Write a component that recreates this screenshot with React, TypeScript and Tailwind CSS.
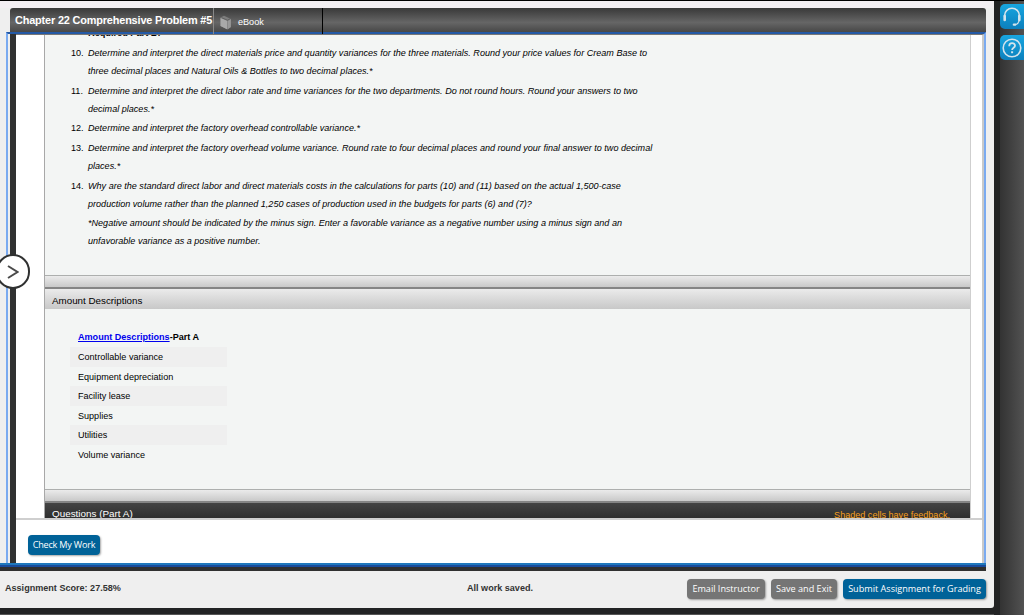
import clsx from "clsx";

type Requirement = {
  num?: string;
  lines: string[];
  height: string;
};

const requirements: Requirement[] = [
  {
    num: "10.",
    height: "h-[38px]",
    lines: [
      "Determine and interpret the direct materials price and quantity variances for the three materials. Round your price values for Cream Base to",
      "three decimal places and Natural Oils & Bottles to two decimal places.*",
    ],
  },
  {
    num: "11.",
    height: "h-[37.5px]",
    lines: [
      "Determine and interpret the direct labor rate and time variances for the two departments. Do not round hours. Round your answers to two",
      "decimal places.*",
    ],
  },
  {
    num: "12.",
    height: "h-[19.5px]",
    lines: ["Determine and interpret the factory overhead controllable variance.*"],
  },
  {
    num: "13.",
    height: "h-[38px]",
    lines: [
      "Determine and interpret the factory overhead volume variance. Round rate to four decimal places and round your final answer to two decimal",
      "places.*",
    ],
  },
  {
    num: "14.",
    height: "h-[37.5px]",
    lines: [
      "Why are the standard direct labor and direct materials costs in the calculations for parts (10) and (11) based on the actual 1,500-case",
      "production volume rather than the planned 1,250 cases of production used in the budgets for parts (6) and (7)?",
    ],
  },
  {
    height: "h-[38px]",
    lines: [
      "*Negative amount should be indicated by the minus sign. Enter a favorable variance as a negative number using a minus sign and an",
      "unfavorable variance as a positive number.",
    ],
  },
];

const amounts = [
  "Controllable variance",
  "Equipment depreciation",
  "Facility lease",
  "Supplies",
  "Utilities",
  "Volume variance",
];

function BookIcon() {
  return (
    <svg width="12" height="15" viewBox="0 0 12 15">
      <path d="M0.5 2.6 L4 0.8 L11 4 V12 L7.5 14.5 L0.5 11 Z" fill="#7d7d7d" />
      <path d="M0.5 3 L7 5.8 V14.2 L0.5 11 Z" fill="#a9a9a9" />
      <path d="M7.6 6 L10.8 4.2 V12 L7.6 14.2 Z" fill="#999" />
      <path d="M1.5 2.6 L7.4 5.2 L10.2 3.8" stroke="#555" strokeWidth="0.7" fill="none" />
    </svg>
  );
}

function HeadsetIcon() {
  return (
    <svg width="20" height="20" viewBox="0 0 20 20" fill="none" stroke="#d4e4ec" strokeLinecap="round">
      <path d="M2.6 9.5 V8.6 a7.4 7.4 0 0 1 14.8 0 V9.5" strokeWidth="1.5" />
      <path d="M2.7 9 V13 M17.3 9 V13" strokeWidth="2.6" />
      <path d="M17 14 C16.4 16.2 15 17.4 13 17.6" strokeWidth="1.1" />
      <path d="M11.8 17.7 h1.4" strokeWidth="2.2" />
    </svg>
  );
}

function HelpIcon() {
  return (
    <svg width="20" height="20" viewBox="0 0 20 20" fill="none" stroke="#d4e4ec">
      <circle cx="10" cy="10" r="8.8" strokeWidth="1.6" />
      <path d="M7.2 8.2 C7.2 4.2 13 4.3 13 7.8 C13 9.9 10.1 9.8 10.1 12" strokeWidth="1.8" />
      <path d="M10.1 13.3 v1.9" strokeWidth="2" />
    </svg>
  );
}

function SectionFooter() {
  return (
    <div className="h-[14px] border-t border-[#adafae] border-b-2 border-b-[#858585] bg-gradient-to-b from-[#ebebeb] to-[#c9c9c9]" />
  );
}

function ActionButton({ label, className }: { label: string; className: string }) {
  return (
    <button
      type="button"
      className={clsx(
        "h-[20px] shrink-0 whitespace-nowrap rounded-[4px] text-center font-['Open_Sans',sans-serif] leading-[20px] text-white shadow-[1px_1px_2px_rgba(0,0,0,0.35)]",
        className
      )}
    >
      {label}
    </button>
  );
}

export default function App() {
  return (
    <div className="flex h-[615px] w-[1024px] overflow-hidden bg-[#222324] font-['Liberation_Sans',Arial,sans-serif] text-black">
      <div className="flex w-[994px] shrink-0 flex-col">
        <main className="relative flex h-[607.5px] flex-col rounded-br-[3px] border-t border-black bg-[#efefef]">
          <div className="h-[7px] shrink-0 bg-[#f3eff3]" />

          <header className="relative z-10 ml-[10px] flex h-[24px] w-[976px] shrink-0 rounded-t-[3px] bg-gradient-to-b from-[#393939] via-[#666] via-60% to-[#484848] text-white">
            <h1 className="w-[203px] whitespace-nowrap pl-[5px] text-[10.9px] font-bold leading-[24px] tracking-[-0.16px]">
              Chapter 22 Comprehensive Problem #5
            </h1>
            <div className="flex h-[26px] w-[110px] border-l border-[#888] border-r border-r-black pl-[6px] pt-[7px]">
              <BookIcon />
              <span className="pl-[6px] text-[9.1px] leading-[15px]">eBook</span>
            </div>
          </header>

          <div className="ml-[6px] flex h-[531px] w-[980px] shrink-0 border-x-2 border-t-2 border-x-[#7aaaf0] border-t-[#2459a5]">
            <div className="w-[2px] shrink-0 bg-[#efefef]" />
            <div className="w-[6px] shrink-0 bg-[#303131]" />
            <div className="flex grow flex-col border-r-2 border-t border-[#c9c9c9] border-t-[#777] bg-white">
              <div className="ml-[28px] h-[483px] w-[927px] shrink-0 overflow-hidden border-x border-l-[#a8a8a8] border-r-[#cfcfcf] bg-[#f3f5f4]">
                <section className="h-[240px] overflow-hidden">
                  <div className="h-[8.5px] pl-[43px] text-[9.2px] font-bold">
                    <p className="-mt-[7px] leading-[11px]">Required Part B:</p>
                  </div>
                  <ol className="pt-[7px] text-[9.07px] leading-[18.2px]">
                    {requirements.map((item, i) => (
                      <li key={i} className={clsx("flex whitespace-nowrap", item.height)}>
                        <span className="w-[43px] shrink-0 pl-[26px]">{item.num}</span>
                        <div className="italic">
                          {item.lines.map((line) => (
                            <p key={line}>{line}</p>
                          ))}
                        </div>
                      </li>
                    ))}
                  </ol>
                </section>
                <SectionFooter />

                <h2 className="h-[20px] bg-gradient-to-b from-[#ebebeb] to-[#c8c8c8] pl-[7px] text-[9.8px] leading-[23px]">
                  Amount Descriptions
                </h2>
                <section className="h-[180px] pl-[25px] pt-[19px] text-[9.07px]">
                  <p className="h-[19px] pl-[8px] font-bold leading-[18px]">
                    <a href="#amounts" className="text-[#0000ee] underline">
                      Amount Descriptions
                    </a>
                    -Part A
                  </p>
                  <ul className="w-[157px] leading-[21px]">
                    {amounts.map((label) => (
                      <li key={label} className="h-[19.6px] pl-[8px] odd:bg-[#efefef]">
                        {label}
                      </li>
                    ))}
                  </ul>
                </section>
                <SectionFooter />

                <div className="flex h-[24px] justify-between bg-gradient-to-b from-[#444] to-[#222] pl-[7px] pr-[20px] text-white">
                  <span className="text-[9.9px] leading-[22px]">Questions (Part A)</span>
                  <span className="text-[9.07px] leading-[25px] text-[#f7a01d]">Shaded cells have feedback.</span>
                </div>
              </div>

              <div className="flex grow border-t-2 border-[#cfcfcf] bg-white pl-[12px] pt-[15px]">
                <ActionButton label="Check My Work" className="w-[72px] bg-[#006298] text-[9.1px] tracking-[-0.22px]" />
              </div>
            </div>
          </div>

          <div className="h-[8px] w-[986px] shrink-0 border-b-4 border-t-2 border-b-[#303030] border-t-[#1f78bd] bg-[#1a4c9c]" />

          <footer className="flex grow items-center pl-[5px] text-[9.07px] font-bold text-[#333]">
            <span className="w-[462px]">Assignment Score: 27.58%</span>
            <span className="w-[220px]">All work saved.</span>
            <div className="flex gap-[6px] font-normal">
              <ActionButton label="Email Instructor" className="w-[78px] bg-[#757575] text-[9.1px]" />
              <ActionButton label="Save and Exit" className="w-[66px] bg-[#757575] text-[9.1px]" />
              <ActionButton label="Submit Assignment for Grading" className="w-[143px] bg-[#006298] text-[9.1px]" />
            </div>
          </footer>

          <button
            type="button"
            className="absolute -left-[4px] top-[253px] z-20 flex h-[35px] w-[34px] items-center justify-center rounded-full border-2 border-[#303131] bg-white"
          >
            <svg width="12" height="14" viewBox="0 0 12 14" fill="none" stroke="#4a4a4a" strokeWidth="2">
              <path d="M1 1 L10.5 7 L1 13" />
            </svg>
          </button>
        </main>
        <div className="mt-auto h-[1px] bg-[#555]" />
      </div>

      <aside className="flex grow flex-col border-t border-black pl-[6px]">
        <div className="flex grow flex-col gap-[6px] border-r border-[#777] bg-gradient-to-r from-[#333] to-[#525252] pt-[3px]">
          <button
            type="button"
            className="flex h-[25px] w-[24px] items-center justify-center rounded-l-[5px] bg-gradient-to-b from-[#18a6e0] to-[#0c80bd]"
          >
            <HeadsetIcon />
          </button>
          <button
            type="button"
            className="flex h-[25px] w-[24px] items-center justify-center rounded-l-[5px] bg-gradient-to-b from-[#18a6e0] to-[#0c80bd]"
          >
            <HelpIcon />
          </button>
        </div>
      </aside>
    </div>
  );
}
